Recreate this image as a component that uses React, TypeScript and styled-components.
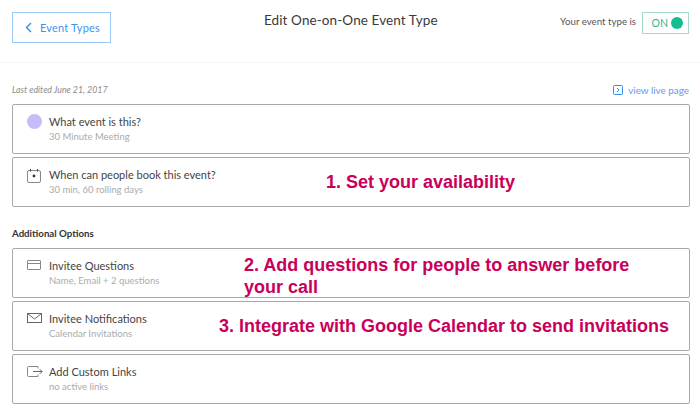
import React from 'react';
import styled, { createGlobalStyle } from 'styled-components';

const GlobalStyle = createGlobalStyle`
  html, body {
    margin: 0;
    padding: 0;
    background: #fff;
  }
  body {
    font-family: 'Lato', 'Liberation Sans', sans-serif;
  }
`;

function CalendarIcon() {
  return (
    <svg width="14" height="14" viewBox="0 0 14 14" fill="none" stroke="#888">
      <rect x="0.5" y="1.5" width="13" height="12" rx="1.5" />
      <path d="M3.5 0v2.5M10.5 0v2.5" stroke="#444" />
      <circle cx="7" cy="7" r="1.4" fill="#333" stroke="none" />
    </svg>
  );
}

function FormIcon() {
  return (
    <svg width="14" height="10" viewBox="0 0 14 10" fill="none" stroke="#888">
      <rect x="0.5" y="0.5" width="13" height="9" rx="0.5" />
      <path d="M0.5 3.5h13" />
    </svg>
  );
}

function MailIcon() {
  return (
    <svg width="15" height="10" viewBox="0 0 15 10" fill="none" stroke="#666">
      <rect x="0.5" y="0.5" width="14" height="9" />
      <path d="M0.5 0.5l7 5.5 7-5.5" />
    </svg>
  );
}

function LinkIcon() {
  return (
    <svg width="16" height="11" viewBox="0 0 16 11" fill="none" stroke="#888">
      <path d="M11 2.5V0.5H1.5a1 1 0 0 0-1 1v8a1 1 0 0 0 1 1H11V8.5" />
      <path d="M6 5.5h9M12.8 3.2l2.3 2.3-2.3 2.3" stroke="#666" />
    </svg>
  );
}

function App() {
  return (
    <>
      <GlobalStyle />
      <Page>
        <Header>
          <BackButton>
            <svg width="7" height="11" viewBox="0 0 7 11" fill="none" stroke="#2f8df0" strokeWidth="1.4">
              <path d="M6 1L1.5 5.5 6 10" />
            </svg>
            Event Types
          </BackButton>
          <Title>Edit One-on-One Event Type</Title>
          <StatusBox>
            <StatusLabel>Your event type is</StatusLabel>
            <Toggle>
              ON
              <ToggleDot />
            </Toggle>
          </StatusBox>
        </Header>
        <Content>
          <MetaRow>
            <LastEdited>Last edited June 21, 2017</LastEdited>
            <LiveLink>
              <svg width="10" height="10" viewBox="0 0 10 10" fill="none" stroke="#2f8df0">
                <rect x="0.5" y="0.5" width="9" height="9" rx="1" />
                <path d="M4 3l2 2-2 2" />
              </svg>
              view live page
            </LiveLink>
          </MetaRow>
          <CardList>
            <Card>
              <IconSlot><Dot /></IconSlot>
              <CardText>
                <CardTitle>What event is this?</CardTitle>
                <CardSub>30 Minute Meeting</CardSub>
              </CardText>
            </Card>
            <Card>
              <IconSlot><CalendarIcon /></IconSlot>
              <CardText>
                <CardTitle>When can people book this event?</CardTitle>
                <CardSub>30 min, 60 rolling days</CardSub>
              </CardText>
              <Note $left={313} $top={13}>1. Set your availability</Note>
            </Card>
          </CardList>
          <SectionTitle>Additional Options</SectionTitle>
          <CardList>
            <Card>
              <IconSlot><FormIcon /></IconSlot>
              <CardText>
                <CardTitle>Invitee Questions</CardTitle>
                <CardSub>Name, Email + 2 questions</CardSub>
              </CardText>
              <Note $left={231} $top={5} $width={420}>2. Add questions for people to answer before your call</Note>
            </Card>
            <Card>
              <IconSlot><MailIcon /></IconSlot>
              <CardText>
                <CardTitle>Invitee Notifications</CardTitle>
                <CardSub>Calendar Invitations</CardSub>
              </CardText>
              <Note $left={206} $top={13}>3. Integrate with Google Calendar to send invitations</Note>
            </Card>
            <Card>
              <IconSlot><LinkIcon /></IconSlot>
              <CardText>
                <CardTitle>Add Custom Links</CardTitle>
                <CardSub>no active links</CardSub>
              </CardText>
            </Card>
          </CardList>
        </Content>
      </Page>
    </>
  );
}

const Page = styled.div`
  width: 700px;
  height: 417px;
  overflow: hidden;
`;
const Header = styled.div`
  position: relative;
  display: flex;
  justify-content: space-between;
  height: 63px;
  padding: 12px 11px 0 12px;
  box-sizing: border-box;
  border-bottom: 1px solid #f3f6f9;
`;
const BackButton = styled.div`
  display: flex;
  align-items: center;
  gap: 8px;
  width: 99px;
  height: 31px;
  padding-left: 12px;
  box-sizing: border-box;
  border: 1px solid #9cc8f7;
  color: #3f93ee;
  font-size: 11px;
  letter-spacing: 0.2px;
`;
const Title = styled.div`
  position: absolute;
  left: 264px;
  top: 12px;
  font-size: 13.5px;
  letter-spacing: 0.1px;
  color: #3a3a3a;
`;
const StatusBox = styled.div`
  display: flex;
  align-items: flex-start;
  gap: 6px;
`;
const StatusLabel = styled.div`
  margin-top: 3px;
  font-size: 9.7px;
  color: #555;
`;
const Toggle = styled.div`
  display: flex;
  align-items: center;
  justify-content: flex-end;
  gap: 3px;
  width: 47px;
  height: 22px;
  padding-right: 5px;
  box-sizing: border-box;
  border: 1px solid #a5dcc8;
  color: #35b58c;
  font-size: 10.5px;
`;
const ToggleDot = styled.span`
  width: 12px;
  height: 12px;
  border-radius: 50%;
  background: #14bd8f;
`;
const Content = styled.div`
  padding: 0 10px 0 12px;
`;
const MetaRow = styled.div`
  display: flex;
  justify-content: space-between;
  align-items: center;
  height: 41px;
  padding-top: 12px;
  box-sizing: border-box;
`;
const LastEdited = styled.div`
  font-size: 8.8px;
  font-style: italic;
  color: #8d8d8d;
`;
const LiveLink = styled.div`
  display: flex;
  align-items: center;
  gap: 5px;
  margin-right: 1px;
  font-size: 9.9px;
  color: #5e9bf0;
`;
const CardList = styled.div`
  display: flex;
  flex-direction: column;
  gap: 3px;
`;
const Card = styled.div`
  position: relative;
  display: flex;
  align-items: flex-start;
  height: 50px;
  padding: 10px 0 0 14px;
  box-sizing: border-box;
  border: 1px solid #a8a8a8;
  border-radius: 2px;
`;
const IconSlot = styled.div`
  display: flex;
  justify-content: flex-start;
  width: 16px;
  margin: 1px 6px 0 0;
`;
const Dot = styled.span`
  width: 15px;
  height: 15px;
  margin-top: -2px;
  border-radius: 50%;
  background: #c5bdf9;
`;
const CardText = styled.div`
  display: flex;
  flex-direction: column;
  gap: 2px;
`;
const CardTitle = styled.div`
  font-size: 11px;
  line-height: 14px;
  color: #444;
`;
const CardSub = styled.div`
  font-size: 9.5px;
  line-height: 12px;
  color: #ababab;
`;
const Note = styled.div<{ $left: number; $top: number; $width?: number }>`
  position: absolute;
  left: ${(props) => props.$left}px;
  top: ${(props) => props.$top}px;
  width: ${(props) => (props.$width ? `${props.$width}px` : 'auto')};
  white-space: ${(props) => (props.$width ? 'normal' : 'nowrap')};
  font-family: 'Liberation Sans', Arial, sans-serif;
  font-size: 18px;
  line-height: 22px;
  font-weight: 700;
  color: #c8005a;
`;
const SectionTitle = styled.div`
  margin: 20px 0 9px;
  font-size: 9.7px;
  line-height: 12px;
  font-weight: 700;
  color: #333;
`;

export default App;
